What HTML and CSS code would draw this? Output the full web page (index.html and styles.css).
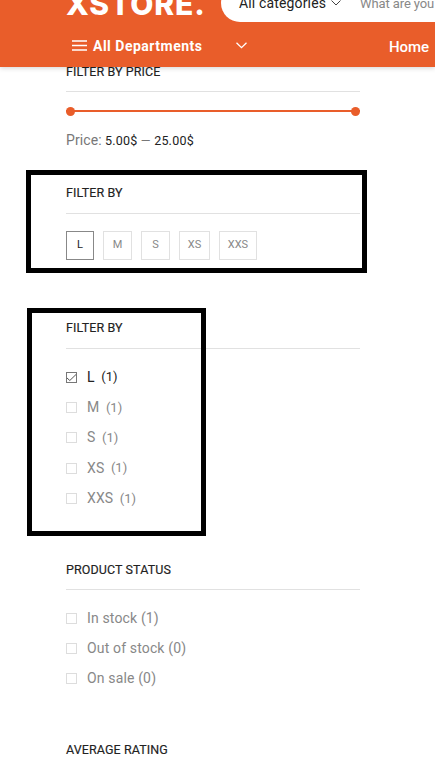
FILE: index.html
```
<!DOCTYPE html>
<html lang="en">
<head>
<meta charset="utf-8">
<title>XSTORE</title>
<link rel="stylesheet" href="styles.css">
</head>
<body>
<header class="header">
  <div class="top">
    <div class="logo">XSTORE.</div>
    <div class="search">
      <span class="category">All categories</span>
      <svg class="chev-small" width="10" height="6" viewBox="0 0 10 6"><path d="M.5 .5 5 5 9.500 .5"/></svg>
      <span class="placeholder">What are you</span>
    </div>
  </div>
  <nav class="nav">
    <svg class="burger" width="15" height="11" viewBox="0 0 15 11"><path d="M0 1h15M0 5.500h15M0 10h15"/></svg>
    <span class="departments">All Departments</span>
    <svg class="chev" width="11" height="7" viewBox="0 0 11 7"><path d="M.5 .7 5.500 5.700 10.500 .7"/></svg>
    <span class="home">Home</span>
  </nav>
</header>
<main class="sidebar">
  <section class="price">
    <h2 class="low">FILTER BY PRICE</h2>
    <div class="slider"><i></i><i></i></div>
    <p class="range"><span class="label">Price:</span><span class="amount">5.00$ <span class="dash">—</span> 25.00$</span></p>
  </section>
  <section class="sizes">
    <h2>FILTER BY</h2>
    <div class="swatches"><span class="swatch on w28">L</span><span class="swatch w29">M</span><span class="swatch w29">S</span><span class="swatch w31">XS</span><span class="swatch w38">XXS</span></div>
    <div class="frame frame-sizes"></div>
  </section>
  <section class="checks">
    <h2>FILTER BY</h2>
    <ul>
      <li class="on"><span class="box"><svg width="11" height="11" viewBox="0 0 11 11"><path d="M1 6 3.800 8.500 10 2.500"/></svg></span><span class="name">L</span><span class="count">(1)</span></li>
      <li><span class="box"></span><span class="name">M</span><span class="count">(1)</span></li>
      <li><span class="box"></span><span class="name">S</span><span class="count">(1)</span></li>
      <li><span class="box"></span><span class="name">XS</span><span class="count">(1)</span></li>
      <li><span class="box"></span><span class="name">XXS</span><span class="count">(1)</span></li>
    </ul>
    <div class="frame frame-checks"></div>
  </section>
  <section class="status">
    <h2 class="low">PRODUCT STATUS</h2>
    <ul>
      <li><span class="box"></span><span class="name">In stock (1)</span></li>
      <li><span class="box"></span><span class="name">Out of stock (0)</span></li>
      <li><span class="box"></span><span class="name">On sale (0)</span></li>
    </ul>
  </section>
  <section class="rating">
    <h2 class="low">AVERAGE RATING</h2>
  </section>
</main>
</body>
</html>
```
FILE: styles.css
```
* { box-sizing: border-box; }
body { margin: 0; width: 435px; height: 757px; overflow: hidden; background: #fff; color: #222; font-family: Roboto, "Liberation Sans", sans-serif; }
.header { position: relative; z-index: 2; height: 67px; background: #e95d2a; color: #fff; box-shadow: 0 1px 5px rgba(0,0,0,.18); }
.top { display: flex; height: 22px; align-items: flex-end; overflow: hidden; }
.logo { flex: none; width: 155px; margin-left: 66px; height: 40px; font: 800 30px/45px Inter, sans-serif; letter-spacing: .9px; white-space: nowrap; }
.search { display: flex; align-items: center; flex: none; width: 300px; height: 38px; padding-left: 18px; border-radius: 19px; background: #fff; white-space: nowrap; }
.category { width: 91px; color: #222; font-size: 14px; letter-spacing: .15px; }
.chev-small { flex: none; margin-left: 1px; fill: none; stroke: #444; stroke-width: 1; }
.placeholder { margin-left: 19px; color: #888; font-size: 13px; letter-spacing: -.1px; }
.nav { display: flex; align-items: center; height: 45px; padding: 2px 0 0 72px; white-space: nowrap; }
.burger, .chev { flex: none; fill: none; stroke: #fff; stroke-width: 1.3; }
.departments { width: 143px; margin-left: 6px; font-size: 14px; font-weight: 700; letter-spacing: .5px; }
.home { margin-left: 142px; padding-top: 2px; font-size: 15px; font-weight: 500; letter-spacing: -.1px; }
.sidebar { width: 294px; margin: -6px 0 0 66px; }
section { position: relative; }
h2 { height: 31px; margin: 0; border-bottom: 1px solid #e1e1e1; font-size: 12.500px; font-weight: 400; line-height: 20px; letter-spacing: .1px; -webkit-text-stroke: .15px; white-space: nowrap; }
h2.low { line-height: 22px; }
.price { height: 122px; }
.sizes { height: 135px; }
.checks { height: 241px; }
.status { height: 180px; }
.slider { display: flex; justify-content: space-between; align-items: center; height: 9px; margin-top: 15px; background: linear-gradient(#e95d2a, #e95d2a) 0 3px / 100% 2px no-repeat; }
.slider i { width: 9px; height: 9px; margin-top: -1px; border-radius: 50%; background: #e95d2a; }
.range { display: flex; align-items: baseline; margin: 14px 0 0; line-height: 20px; white-space: nowrap; }
.label { width: 39px; color: #777; font-size: 14px; letter-spacing: .1px; }
.amount { font-size: 12.500px; letter-spacing: .22px; }
.dash { color: #777; }
.swatches { display: flex; height: 29px; margin-top: 17px; }
.swatch { height: 29px; margin-right: 9px; border: 1px solid #e1e1e1; color: #888; font-size: 11px; line-height: 26px; text-align: center; }
.swatch.on { border-color: #888; color: #222; }
.w28 { width: 28px; }
.w29 { width: 29px; }
.w31 { width: 31px; }
.w38 { width: 38px; }
ul { margin: 13px 0 0; padding: 0; list-style: none; }
li { display: flex; align-items: center; height: 30.400px; color: #888; font-size: 14px; letter-spacing: .15px; white-space: nowrap; }
.name, .count { padding-bottom: 1px; }
li.on { color: #222; }
.box { width: 11px; height: 11px; margin-right: 10px; border: 1px solid #ddd; }
.on .box { border-color: #777; }
.box svg { display: block; margin: -1px; fill: none; stroke: #555; stroke-width: 1; }
.count { margin-left: 6.500px; font-size: 13px; letter-spacing: 0; }
.rating h2 { border-bottom: 0; }
.frame { position: absolute; border: 5px solid #000; }
.frame-sizes { left: -40px; top: -13px; width: 341px; height: 103px; }
.frame-checks { left: -39px; top: -10px; width: 179px; height: 228px; }
```
